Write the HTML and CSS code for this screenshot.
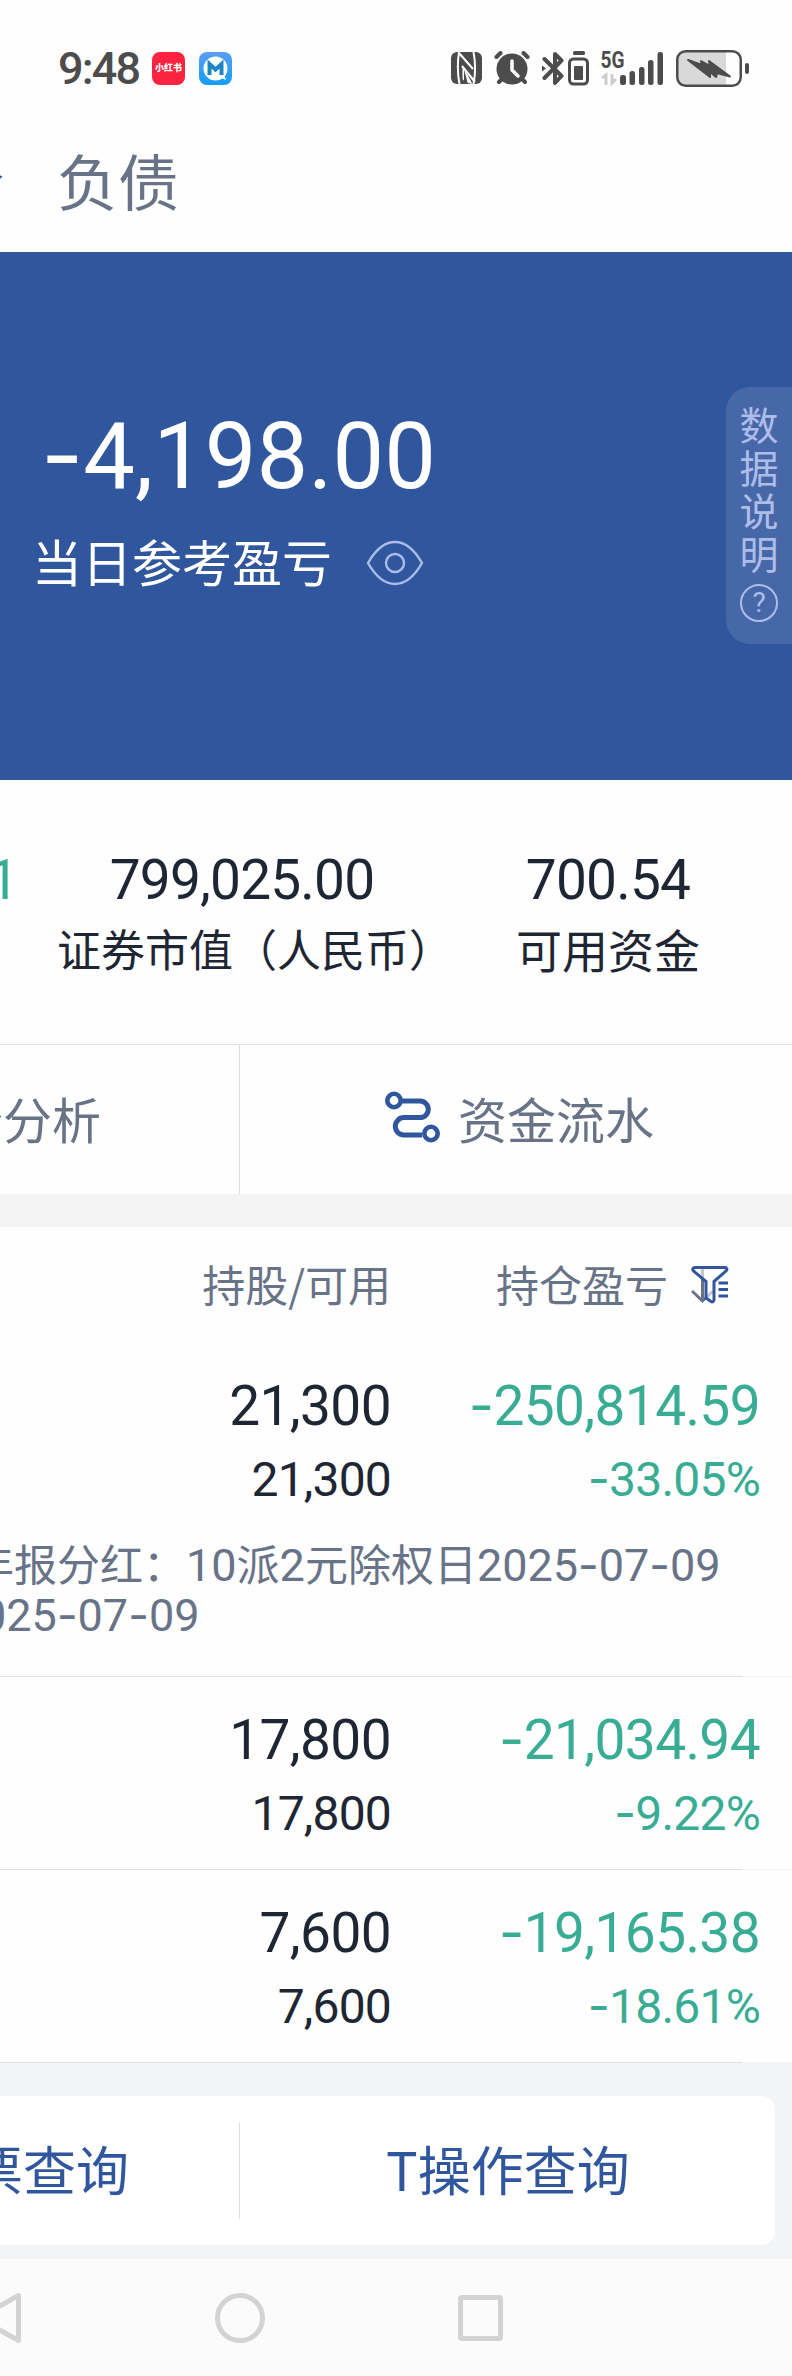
FILE: index.html
```html
<!DOCTYPE html>
<html lang="zh-CN">
<head>
    <meta charset="UTF-8">
    <meta name="viewport" content="width=device-width, initial-scale=1.0">
    <title>持仓</title>
    <link rel="stylesheet" href="styles.css">
</head>
<body>

<div class="status-bar">
    <span class="clock">9:48</span>
    <span class="app-icon app-red">小红书</span>
    <svg class="app-icon" width="33" height="33" viewBox="0 0 33 33">
        <defs>
            <linearGradient id="app-blue" x1="0" y1="0" x2="0" y2="1">
                <stop offset="0" stop-color="#5a9df0"/>
                <stop offset="1" stop-color="#129ff5"/>
            </linearGradient>
        </defs>
        <rect width="33" height="33" rx="8" fill="url(#app-blue)"/>
        <circle cx="16.5" cy="16.5" r="12" fill="#fff"/>
        <path d="M20 25l7 3-2-6z" fill="#fff"/>
        <path d="M10.5 23V12l6 5.5 6-5.5v11" fill="none" stroke="#1c85c4" stroke-width="4"/>
    </svg>
    <div class="status-icons">
        <svg width="31" height="32" viewBox="0 0 31 32">
            <rect width="31" height="32" rx="6" fill="#4c4c4c"/>
            <path d="M8 0C6.500 10 6.500 22 8.500 32M22.500 0c2 10 2 22 0 32M8 1l14 16M11 14l13 16" fill="none" stroke="#fff" stroke-width="2"/>
            <path d="M11.500 14v13l3 3.500 7 1.500z" fill="#fff"/>
            <path d="M13 17.500V32h4z" fill="#4c4c4c"/>
        </svg>
        <svg class="alarm" width="36" height="34" viewBox="0 0 36 34">
            <g stroke="#4c4c4c" stroke-width="4" stroke-linecap="round">
                <path d="M2.500 6l4-4M33.500 6l-4-4M5 31l4-4M31 31l-4-4"/>
            </g>
            <circle cx="18" cy="18" r="15.500" fill="#4c4c4c"/>
            <path d="M18 10v9l6 6" fill="none" stroke="#fff" stroke-width="3.500" stroke-linecap="round"/>
        </svg>
        <svg class="bluetooth" width="47" height="35" viewBox="0 0 47 35">
            <path d="M2.500 8l17 17-6.500 7V3l6.500 6.500L2.500 27" fill="none" stroke="#4c4c4c" stroke-width="4" stroke-linejoin="round" stroke-linecap="round"/>
            <path d="M0 14.500l4 3-4 3z" fill="#4c4c4c"/>
            <rect x="31" y="0" width="12" height="4" rx="1.500" fill="#4c4c4c"/>
            <rect x="27.500" y="8" width="18" height="25" rx="4" fill="none" stroke="#4c4c4c" stroke-width="3"/>
            <rect x="32" y="15" width="9" height="14" rx="1" fill="#4c4c4c"/>
        </svg>
        <svg class="signal" width="62" height="36" viewBox="0 0 62 36">
            <text class="net-type" x="-0.500" y="18" textLength="24" lengthAdjust="spacingAndGlyphs">5G</text>
            <path d="M1 28l4-3v10M11 24v9l4-4" fill="none" stroke="#cdcdcd" stroke-width="3"/>
            <g fill="#4c4c4c">
                <rect x="19" y="25" width="6" height="10" rx="2.500"/>
                <rect x="28.500" y="21" width="5.500" height="14" rx="2.500"/>
                <rect x="38" y="17" width="5.500" height="18" rx="2.500"/>
                <rect x="47" y="10" width="5.500" height="25" rx="2.500"/>
                <rect x="56.500" y="2" width="5.500" height="33" rx="2.500"/>
            </g>
        </svg>
        <svg class="battery" width="73" height="37" viewBox="0 0 73 37">
            <path d="M9 2h41v33H9a8 8 0 0 1-8-8V10a8 8 0 0 1 8-8z" fill="#d9d9d9"/>
            <rect x="1.250" y="1.250" width="63.500" height="34.500" rx="8.500" fill="none" stroke="#4c4c4c" stroke-width="2.500"/>
            <rect x="69" y="13" width="4" height="11" rx="2" fill="#4c4c4c"/>
            <path d="M12 10l14 5-1-4 9 5-1-5 21 15.500-13-3.500-1 4-6-5v5z" fill="#4c4c4c" stroke="#4c4c4c" stroke-width="2" stroke-linejoin="round"/>
        </svg>
    </div>
</div>

<div class="top-tabs">
    <span class="top-tab active">仓</span>
    <span class="top-tab">负债</span>
</div>

<div class="hero">
    <div class="hero-value"><span class="dash">-</span>4,198.00</div>
    <div class="hero-label">
        <span>当日参考盈亏</span>
        <svg width="58" height="46" viewBox="0 0 58 46" fill="none" stroke="#a9bbe6" stroke-width="2.500">
            <path d="M2 23C10 9 19 2 29 2s19 7 27 21C48 37 39 44 29 44S10 37 2 23z" stroke-linejoin="round"/>
            <circle cx="29" cy="23" r="9"/>
        </svg>
    </div>
    <div class="data-note">
        <div class="data-note-text">数据说明</div>
        <i class="question">?</i>
    </div>
</div>

<div class="summary">
    <div class="summary-item cut">
        <div class="summary-value green">1</div>
    </div>
    <div class="summary-item market">
        <div class="summary-value">799,025.00</div>
        <div class="summary-label">证券市值（人民币）</div>
    </div>
    <div class="summary-item cash">
        <div class="summary-value">700.54</div>
        <div class="summary-label">可用资金</div>
    </div>
</div>

<div class="actions">
    <div class="action action-left">仓分析</div>
    <div class="action">
        <svg width="58" height="54" viewBox="0 0 58 54" fill="none" stroke="#30569e" stroke-width="5">
            <path d="M18 11h18a8.300 8.300 0 0 1 0 16.600H20a8.700 8.700 0 0 0 0 17.400h18"/>
            <circle cx="10" cy="10.500" r="6.700" stroke-width="4.600"/>
            <circle cx="47" cy="43.500" r="6.700" stroke-width="4.600"/>
        </svg>
        <span>资金流水</span>
    </div>
</div>

<div class="holdings">
    <div class="holdings-head">
        <div class="col-qty">持股/可用</div>
        <div class="col-profit">
            <span>持仓盈亏</span>
            <svg width="38" height="40" viewBox="0 0 38 40" fill="none">
                <path d="M11.500 4v32M1 26l10.500 10L22 26" stroke="#687388" stroke-width="3"/>
                <path d="M4 2.500h30c2 0 2.500 2 1 3.500L23 16.500v18c0 2-1.500 3-3 2l-5-3.500V16.500L2.500 6C1 4.500 2 2.500 4 2.500z" fill="#fff" fill-opacity=".6" stroke="#30569e" stroke-width="3"/>
                <path d="M27.500 18h9.500M27.500 24.500h9.500M27.500 31h9.500" stroke="#30569e" stroke-width="3"/>
            </svg>
        </div>
    </div>

    <div class="row">
        <div class="line big">
            <div class="col-qty">21,300</div>
            <div class="col-profit green"><span class="dash">-</span>250,814.59</div>
        </div>
        <div class="line small">
            <div class="col-qty">21,300</div>
            <div class="col-profit green"><span class="dash">-</span>33.05%</div>
        </div>
        <div class="notice">
            <div class="notice-line">年报分红：<span class="num">10</span>派<span class="num">2</span>元除权日<span class="num">2025<span class="dash">-</span>07<span class="dash">-</span>09</span></div>
            <div class="notice-line second"><span class="num">025<span class="dash">-</span>07<span class="dash">-</span>09</span></div>
        </div>
    </div>

    <div class="row">
        <div class="line big">
            <div class="col-qty">17,800</div>
            <div class="col-profit green"><span class="dash">-</span>21,034.94</div>
        </div>
        <div class="line small">
            <div class="col-qty">17,800</div>
            <div class="col-profit green"><span class="dash">-</span>9.22%</div>
        </div>
    </div>

    <div class="row last">
        <div class="line big">
            <div class="col-qty">7,600</div>
            <div class="col-profit green"><span class="dash">-</span>19,165.38</div>
        </div>
        <div class="line small">
            <div class="col-qty">7,600</div>
            <div class="col-profit green"><span class="dash">-</span>18.61%</div>
        </div>
    </div>
</div>

<div class="query-area">
    <div class="query-card">
        <div class="query query-left">票查询</div>
        <div class="query">T操作查询</div>
    </div>
</div>

<div class="nav-bar">
    <svg class="nav-back" width="24" height="54" viewBox="0 0 24 54">
        <path d="M18.500 4.500v45L-22 27z" fill="none" stroke="#d3d3d3" stroke-width="5" stroke-linejoin="round"/>
    </svg>
    <i class="nav-home"></i>
    <i class="nav-recent"></i>
</div>

</body>
</html>
```

FILE: styles.css
```css
* {
    box-sizing: border-box;
}
body {
    margin: 0;
    width: 792px;
    overflow-x: hidden;
    background-color: #fefefe;
    color: #1f2633;
    font-family: "Noto Sans CJK SC", sans-serif;
}
svg {
    display: block;
    flex-shrink: 0;
}
i {
    font-style: normal;
}
.green {
    color: #38ad94;
}
.dash {
    font-family: Inter, sans-serif;
    line-height: 0;
}

/* status bar */
.status-bar {
    display: flex;
    align-items: center;
    height: 136px;
    padding-left: 58px;
}
.clock {
    width: 94px;
    font-family: Roboto, sans-serif;
    font-size: 45px;
    font-weight: 500;
    letter-spacing: -1.8px;
    color: #4c4c4c;
}
.app-icon {
    width: 33px;
    height: 33px;
    margin-right: 14px;
}
.app-red {
    border-radius: 8px;
    background-color: #fc2340;
    color: #fff;
    font-size: 9px;
    font-weight: 900;
    line-height: 32px;
    text-align: center;
}
.status-icons {
    display: flex;
    align-items: center;
    margin-left: 205px;
}
.alarm {
    margin-left: 12px;
}
.bluetooth {
    margin-left: 12px;
}
.signal {
    margin-left: 12px;
}
.battery {
    margin-left: 13px;
}
.net-type {
    font-family: Roboto, sans-serif;
    font-size: 23px;
    font-weight: 700;
    fill: #4c4c4c;
}

/* top tabs */
.top-tabs {
    display: flex;
    height: 116px;
    font-size: 61px;
    line-height: 88px;
    color: #687388;
}
.top-tab.active {
    width: 61px;
    margin-left: -57px;
    margin-right: 53px;
    font-weight: 500;
    color: #30569e;
}

/* blue panel */
.hero {
    position: relative;
    height: 528px;
    padding-top: 150px;
    background-color: #30569e;
    color: #fff;
}
.hero-value {
    padding-left: 41px;
    font-family: Roboto, sans-serif;
    font-size: 92px;
    line-height: 110px;
}
.hero-label {
    display: flex;
    align-items: center;
    gap: 34px;
    margin-top: 13px;
    padding-left: 32px;
    font-size: 50px;
    line-height: 70px;
}
.hero-label svg {
    margin-top: 5px;
}
.data-note {
    position: absolute;
    top: 135px;
    right: 0;
    width: 66px;
    height: 257px;
    padding-top: 15px;
    border-radius: 24px 0 0 24px;
    background-color: #4668a8;
    color: #aebde8;
}
.data-note-text {
    width: 39px;
    margin: 0 auto;
    font-size: 39px;
    line-height: 43px;
    word-break: break-all;
}
.question {
    display: block;
    width: 38px;
    height: 38px;
    margin: 10px auto 0;
    border: 2.5px solid #aebde8;
    border-radius: 50%;
    font-family: Roboto, sans-serif;
    font-size: 28px;
    line-height: 34px;
    text-align: center;
}

/* summary */
.summary {
    display: grid;
    grid-template-columns: 18px 448px 284px;
    height: 264px;
    padding-top: 70px;
    text-align: center;
}
.summary-value {
    font-family: Roboto, sans-serif;
    font-size: 55px;
    line-height: 60px;
    letter-spacing: -0.8px;
}
.cut .summary-value {
    display: flex;
    justify-content: flex-end;
}
.summary-label {
    margin-top: 8px;
    font-size: 44px;
    line-height: 60px;
}
.market .summary-label {
    padding-left: 26px;
}
.cash .summary-label {
    font-size: 46px;
}

/* actions */
.actions {
    display: flex;
    height: 150px;
    border-top: 1px solid #dedfe1;
    color: #687388;
    font-size: 49px;
}
.action {
    display: flex;
    align-items: center;
    flex: 1;
    gap: 16px;
    padding-left: 144px;
    padding-bottom: 5px;
}
.action-left {
    flex: none;
    width: 240px;
    justify-content: flex-end;
    padding-left: 0;
    padding-right: 138px;
    border-right: 1px solid #dedfe1;
    white-space: nowrap;
}

/* holdings */
.holdings {
    border-top: 33px solid #f4f4f4;
}
.holdings-head {
    display: flex;
    align-items: center;
    height: 116px;
    padding-bottom: 4px;
    color: #687388;
    font-size: 43px;
}
.col-qty {
    width: 391px;
    text-align: right;
}
.col-profit {
    width: 369px;
    text-align: right;
}
.holdings-head .col-profit {
    display: flex;
    align-items: center;
    justify-content: flex-end;
    gap: 23px;
    padding-right: 31px;
}
.holdings-head svg {
    margin-top: 3px;
}
.row {
    padding: 33px 0 26px;
    position: relative;
}
.row::after {
    content: "";
    position: absolute;
    left: 0;
    right: 0;
    bottom: 0;
    height: 1px;
    background: linear-gradient(to right, #dedfe1 742px, #f3f3f4 742px);
}
.line {
    display: flex;
    font-family: Roboto, sans-serif;
    line-height: 60px;
}
.big {
    font-size: 55px;
    letter-spacing: -0.6px;
}
.small {
    margin-top: 14px;
    font-size: 48px;
    letter-spacing: -0.8px;
}
.notice {
    margin-top: 27px;
    margin-bottom: 14px;
    overflow: hidden;
    color: #687388;
    font-size: 43px;
    line-height: 50px;
}
.notice-line {
    height: 50px;
    margin-left: -29px;
    white-space: nowrap;
}
.notice-line.second {
    margin-left: -19px;
}
.num {
    font-family: Roboto, sans-serif;
    font-size: 45px;
    line-height: 0;
}

/* bottom card */
.query-area {
    height: 196px;
    padding: 33px 17px 14px 0;
    background-color: #f3f4f6;
}
.query-card {
    display: flex;
    align-items: center;
    height: 149px;
    border-radius: 0 14px 14px 0;
    background-color: #fff;
    color: #30569e;
    font-size: 53px;
}
.query {
    flex: 1;
    height: 97px;
    padding-left: 146px;
    line-height: 92px;
}
.query-left {
    display: flex;
    justify-content: flex-end;
    flex: none;
    width: 240px;
    padding-left: 0;
    padding-right: 110px;
    border-right: 1px solid #dedfe1;
    white-space: nowrap;
}

/* system navigation */
.nav-bar {
    display: flex;
    align-items: center;
    height: 117px;
    background-color: #fbfbfb;
}
.nav-home {
    width: 50px;
    height: 50px;
    margin-left: 191px;
    border: 5px solid #d3d3d3;
    border-radius: 50%;
}
.nav-recent {
    width: 45px;
    height: 46px;
    margin-left: 193px;
    border: 5px solid #d3d3d3;
    border-radius: 4px;
}
```
